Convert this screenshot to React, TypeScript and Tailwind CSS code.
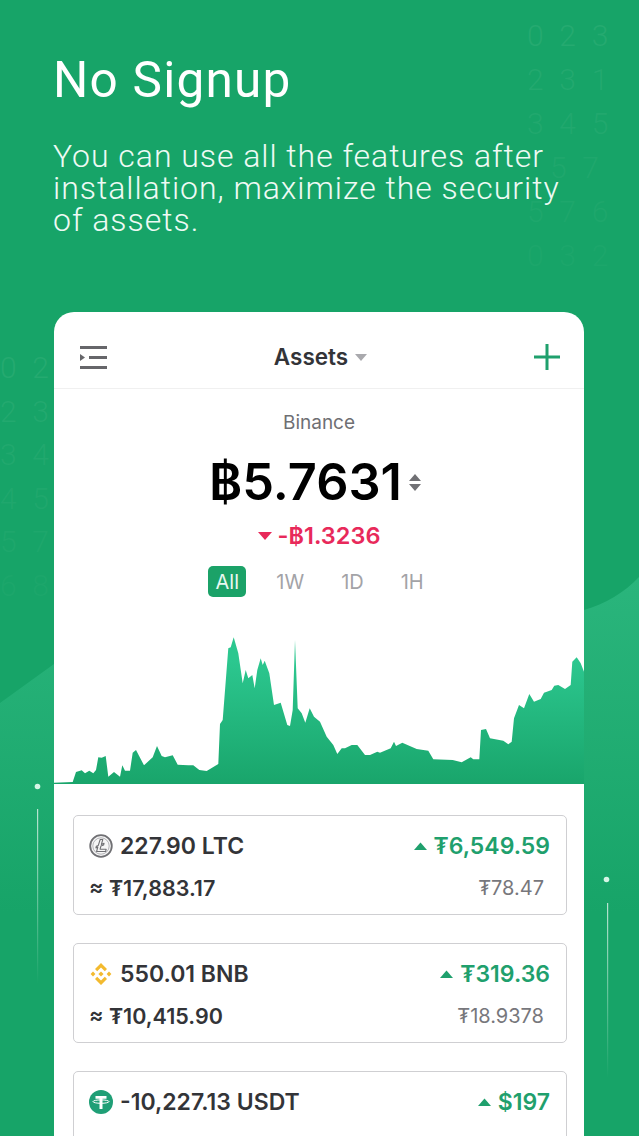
const chart = "M54,784 L54,782.7 72.7,782 76,772 81.7,770.3 85,773.3 89.3,770.7 93.3,773.3 96,770 98.3,757.3 101.7,757.7 105.7,756 108.3,776.7 114,772 120,776.7 122.3,765.3 125,770.7 130,770.7 132.7,752.7 136,750 144,765.3 152.7,757.3 157,746 161.7,756 165,757.3 172.7,755.3 177.7,764.7 188.3,765.3 193.3,765.3 199.3,770 206.7,771 218.3,764 220,724 222.7,720 228.3,648.3 230.7,647.3 233.7,637.3 238.3,653.3 242.7,683.3 245.7,670 248.3,678.3 252.3,675 254.7,688.3 257.3,670 260.7,658.3 262.7,665 264.7,660.7 269.3,673.3 274,705 280.7,702.7 287.3,725 290,726 292.7,710 295,640 297.7,708.3 301.7,713.3 305.3,722.7 309.7,708.3 314,716.7 320,721.7 326.7,736.7 333.3,745 337.3,754 341.7,748.3 345,748.3 351.7,745 357.3,745 365,755 370,755 377.3,751.7 380,752.7 390.7,748.3 394,741.7 396,746 402.3,742.7 416.7,749 428.3,750.7 433.3,759.3 452.7,760 461.7,762.3 470.7,757.3 473.3,759.3 479.3,759.3 481,730 486,729 490,738.3 503.3,740.7 508.3,744.3 511.7,741.7 514,718.3 519,705 524,708.3 529.3,694 534,701.7 540.7,699 544,692.7 551.7,690 554.3,685.7 558.3,685 565,689 570.7,685 572.3,661.7 576.7,657.3 580.7,663.3 584,671.7 L584,784 Z";

function Coin({ kind }: { kind: string }) {
  if (kind === "LTC")
    return (
      <svg width="24" height="24" viewBox="0 0 24 24">
        <circle cx="12" cy="12" r="10.8" fill="#f6f6f6" stroke="#707074" strokeWidth="1.8" />
        <circle cx="12" cy="12" r="8.2" fill="none" stroke="#a0a0a4" strokeWidth="0.8" />
        <path d="M11.2 5.5 H13.8 L12.4 10.4 L15 9.3 L14.6 11 L11.9 12.1 L11.1 15.2 H17.2 L16.6 17.5 H7.6 L8.8 13.1 L6.9 13.9 L7.3 12.3 L9.3 11.4 Z" fill="#f6f6f6" stroke="#707074" strokeWidth="1.1" strokeLinejoin="round" />
      </svg>
    );
  if (kind === "BNB")
    return (
      <svg width="24" height="24" viewBox="0 0 24 24" fill="#f3ba2f">
        <path d="M12 1 L18 7 L15.8 9.2 L12 5.4 L8.2 9.2 L6 7 Z" />
        <path d="M4 9.6 L6.4 12 L4 14.4 L1.6 12 Z" />
        <path d="M20 9.6 L22.4 12 L20 14.4 L17.6 12 Z" />
        <path d="M12 9.4 L14.6 12 L12 14.6 L9.4 12 Z" />
        <path d="M12 23 L6 17 L8.2 14.8 L12 18.6 L15.8 14.8 L18 17 Z" />
      </svg>
    );
  return (
    <svg width="24" height="24" viewBox="0 0 24 24">
      <circle cx="12" cy="12" r="12" fill="#1f9f76" />
      <path d="M6.5 6 H17.5 V8.8 H13.5 V19 H10.5 V8.8 H6.5 Z" fill="#fff" />
      <ellipse cx="12" cy="11.6" rx="8" ry="1.7" fill="none" stroke="#fff" strokeWidth="1" />
    </svg>
  );
}

function UpTri() {
  return (
    <svg width="13" height="8" viewBox="0 0 13 8" className="mr-[7px]">
      <path d="M6.5 0.5 L13 8 H0 Z" fill="#1fa06d" />
    </svg>
  );
}

function AssetCard({ kind, amount, change, approx, price }: { kind: string; amount: string; change: string; approx?: string; price?: string }) {
  return (
    <div className="h-[100px] rounded-[5px] border border-[#cfcfd2] pl-[15px] pr-[16px] pt-[14px]">
      <div className="flex h-[32px] items-center justify-between">
        <div className="flex items-center gap-[7px]">
          <Coin kind={kind} />
          <span className="text-[23px] font-semibold text-[#333438]">{amount}</span>
        </div>
        <div className="flex items-center">
          <UpTri />
          <span className="text-[23px] font-semibold text-[#1fa06d]">{change}</span>
        </div>
      </div>
      {approx && (
        <div className="mt-[10px] flex h-[32px] items-center justify-between pr-[6px]">
          <span className="text-[21.5px] font-semibold text-[#333438]">{approx}</span>
          <span className="text-[20px] text-[#77777c]">{price}</span>
        </div>
      )}
    </div>
  );
}

export default function App() {
  return (
    <div className="relative h-[1136px] w-[639px] overflow-hidden bg-[#17a468] font-['Inter',sans-serif]">
      {/* background wave */}
      <svg className="absolute left-0 top-0" width="639" height="1136" viewBox="0 0 639 1136">
        <defs>
          <linearGradient id="wave" x1="0" y1="0" x2="0" y2="1">
            <stop offset="0" stopColor="#2ab57c" />
            <stop offset="0.6" stopColor="#17a468" />
            <stop offset="1" stopColor="#17a468" />
          </linearGradient>
          <linearGradient id="line" x1="0" y1="0" x2="0" y2="1">
            <stop offset="0" stopColor="#fff" stopOpacity="0.7" />
            <stop offset="1" stopColor="#fff" stopOpacity="0" />
          </linearGradient>
        </defs>
        <path d="M0,703 L54,664 C100,640 560,640 584,610 C605,604 625,592 639,577 V1136 H0 Z" fill="url(#wave)" />
        <circle cx="37.5" cy="786.5" r="2.8" fill="#d6f5e6" />
        <circle cx="606.5" cy="879.5" r="2.8" fill="#d6f5e6" />
        <rect x="37" y="809" width="1.2" height="175" fill="url(#line)" />
        <rect x="607" y="903" width="1.2" height="175" fill="url(#line)" />
      </svg>

      {/* decorative digits */}
      <div className="absolute left-[527px] top-[14px] flex flex-col text-[#25aa70] text-[30px] leading-[44px] tracking-[0.14em] whitespace-pre font-['Roboto',sans-serif] font-light">
        {["0 2 3", "2 3 1", "3 4 5", "  5 7", "5 7 6", "0 3 2"].map((r, i) => (
          <div key={i} style={{ opacity: 1 - i * 0.12 }}>{r}</div>
        ))}
      </div>
      <div className="absolute left-0 top-[346px] flex flex-col text-[#25aa70] text-[30px] leading-[43.5px] tracking-[0.14em] whitespace-pre font-['Roboto',sans-serif] font-light">
        {["0 2", "2 3", "3 4", "4 5", "5 7", "6 8"].map((r, i) => (
          <div key={i} style={{ opacity: 1 - i * 0.12 }}>{r}</div>
        ))}
      </div>

      {/* content */}
      <div className="relative pl-[54px] pr-[55px] pt-[50px]">
        <h1 className="-ml-[1px] h-[60px] text-[49.5px] font-normal leading-[60px] tracking-[0.025em] text-white font-['Roboto',sans-serif]">No Signup</h1>
        <p className="-ml-[1px] mt-[30px] w-[530px] text-[32px] font-light leading-[32px] tracking-[0.03em] text-[#eefaf4] font-['Roboto',sans-serif]">
          You can use all the features after<br />installation, maximize the security<br />of assets.
        </p>

        <div className="mt-[76px] h-[900px] rounded-t-[20px] bg-white">
          <div className="flex h-[77px] items-center justify-between border-b border-[#f0f0f0] pl-[26px] pr-[24px] pt-[14px]">
            <svg width="27" height="23" viewBox="0 0 27 23">
              <path d="M0 1.5 H27 M9 11.5 H27 M0 21.5 H27" stroke="#66666a" strokeWidth="3" />
              <path d="M0 8 L5 11.5 L0 15 Z" fill="#66666a" />
            </svg>
            <div className="flex items-center gap-[7px]">
              <span className="text-[22.5px] font-semibold text-[#333438]">Assets</span>
              <svg width="12" height="7" viewBox="0 0 12 7"><path d="M0 0 H12 L6 7 Z" fill="#a9a9ad" /></svg>
            </div>
            <svg width="26" height="26" viewBox="0 0 26 26">
              <path d="M13 0 V26 M0 13 H26" stroke="#1fa06d" strokeWidth="3" />
            </svg>
          </div>

          <div className="flex flex-col items-center">
            <div className="mt-[22px] text-[19px] leading-[24px] text-[#6f6f73]">Binance</div>
            <div className="mt-[17px] flex h-[60px] items-center pr-[8px]">
              <span className="text-[50.5px] font-semibold leading-[60px] text-black">฿5.7631</span>
              <svg className="ml-[7px]" width="12" height="17" viewBox="0 0 12 17">
                <path d="M6 0 L12 7 H0 Z M0 10 H12 L6 17 Z" fill="#707074" />
              </svg>
            </div>
            <div className="mt-[8px] flex h-[32px] items-center">
              <svg width="14" height="8" viewBox="0 0 14 8" className="mr-[6px]"><path d="M0 0 H14 L7 8 Z" fill="#e8295a" /></svg>
              <span className="text-[23.5px] font-semibold text-[#e8295a]">-฿1.3236</span>
            </div>
            <div className="mt-[14px] flex h-[31px] items-center pr-[6px] text-[20px] text-[#a3a3a7]">
              <div className="flex h-[31px] w-[38px] items-center justify-center rounded-[5px] bg-[#1ba268] text-[#e8f8f0]">All</div>
              <div className="ml-[30px]">1W</div>
              <div className="ml-[37px]">1D</div>
              <div className="ml-[37px]">1H</div>
            </div>
          </div>

          <svg className="mt-[33px] block" width="530" height="154" viewBox="54 630 530 154">
            <defs>
              <linearGradient id="area" gradientUnits="userSpaceOnUse" x1="0" y1="660" x2="0" y2="784">
                <stop offset="0" stopColor="#2cc78f" />
                <stop offset="1" stopColor="#19a56b" />
              </linearGradient>
            </defs>
            <path d={chart} fill="url(#area)" />
          </svg>

          <div className="flex flex-col gap-[28px] pl-[19px] pr-[17px] pt-[31px]">
            <AssetCard kind="LTC" amount="227.90 LTC" change="₮6,549.59" approx="≈ ₮17,883.17" price="₮78.47" />
            <AssetCard kind="BNB" amount="550.01 BNB" change="₮319.36" approx="≈ ₮10,415.90" price="₮18.9378" />
            <AssetCard kind="USDT" amount="-10,227.13 USDT" change="$197" />
          </div>
        </div>
      </div>
    </div>
  );
}
